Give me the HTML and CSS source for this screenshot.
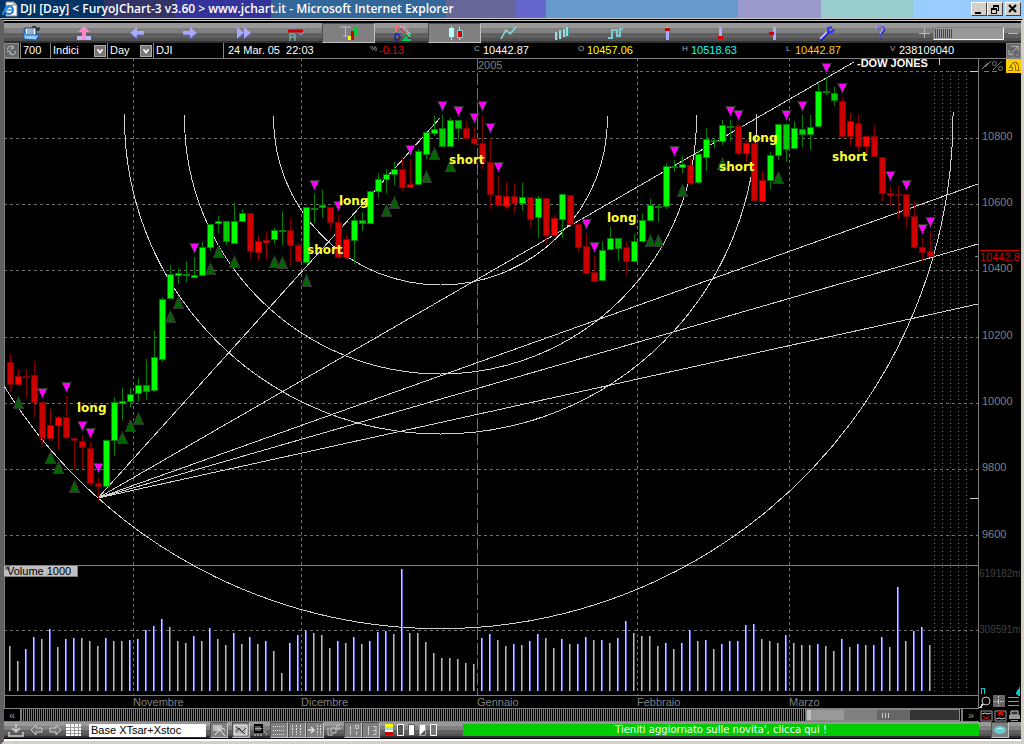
FILE: index.html
```
<!DOCTYPE html>
<html lang="it">
<head>
  <meta charset="UTF-8" />
  <meta name="viewport" content="width=device-width, initial-scale=1.0" />
  <title>DJI [Day] &lt; FuryoJChart-3 v3.60 &gt; www.jchart.it</title>
  <link rel="stylesheet" href="styles.css">
</head>
<body>
  <header class="titlebar">
    <svg class="ie-icon" viewBox="0 0 16 16"><path d="M4 1h8l3 3v11H4z" fill="#fff" stroke="#888"/><path d="M12 1v3h3" fill="none" stroke="#888"/><circle cx="7" cy="9" r="4" fill="none" stroke="#27c" stroke-width="2"/><path d="M4 9h7M1 14Q0 9 11 4" fill="none" stroke="#39d" stroke-width="1.5"/></svg>
    <h1>DJI [Day] &lt; FuryoJChart-3 v3.60 &gt; www.jchart.it - Microsoft Internet Explorer</h1>
    <button class="win" aria-label="Riduci"><svg viewBox="0 0 12 10"><path d="M2 8h6v2H2z"/></svg></button>
    <button class="win" aria-label="Ripristina"><svg viewBox="0 0 12 10"><path d="M4 1h6v2H4zM4 1h1v3H4zM9 1h1v6H9zM8 6h2v1H8zM2 4h6v2H2zM2 4h1v6H2zM7 4h1v6H7zM2 9h6v1H2z"/></svg></button>
    <button class="win win-close" aria-label="Chiudi"><svg viewBox="0 0 12 10"><path d="M2 1l7 7M9 1L2 8" stroke="#000" stroke-width="2"/></svg></button>
  </header>

  <main class="applet">
    <nav class="toolbar">
      <button aria-label="Apri"><svg viewBox="0 0 20 16"><path d="M4 3h11v11H4z" fill="#fff" stroke="#036"/><path d="M6 5h7M6 7h7M6 9h7" stroke="#369"/><path d="M3 14V5l2 5h13l-3 5z" fill="#9cf" stroke="#06c"/><path d="M11 2q4-2 6 2m1-2v3h-3" fill="none" stroke="#000"/></svg></button>
      <button aria-label="Carica"><svg viewBox="0 0 20 16"><path d="M10 1l6 6h-4v8H8V7H4z" fill="#f8c"/><path d="M3 11h5v4H3zM12 11h5v4h-5z" fill="#bbf"/></svg></button>
      <button aria-label="Indietro"><svg viewBox="0 0 20 16"><path d="M3 8l7-6v4h7v4h-7v4z" fill="#aaf"/><path d="M3 8l7 6v-4h7" stroke="#66c" fill="none"/></svg></button>
      <button aria-label="Avanti"><svg viewBox="0 0 20 16"><path d="M17 8l-7-6v4H3v4h7v4z" fill="#aaf"/><path d="M17 8l-7 6v-4H3" stroke="#66c" fill="none"/></svg></button>
      <button aria-label="Ultimo"><svg viewBox="0 0 20 16"><path d="M4 2l7 6-7 6zM11 2l7 6-7 6z" fill="#aaf"/><path d="M11 8l-7 6M18 8l-7 6" stroke="#66c"/></svg></button>
      <button aria-label="Analisi"><svg viewBox="0 0 20 16"><path d="M3 6l4-5 4 5M11 6l4 4 4-4" fill="none" stroke="#99f"/><path d="M2 6h15" stroke="#c00" stroke-width="3"/><path d="M4 16V9h5v7M4 12h5" fill="none" stroke="#7cc"/></svg></button>
      <button class="on" aria-label="Trading"><svg viewBox="0 0 20 16"><path d="M2 3V2h9v1M6.500 2v9M4 11h5" stroke="#bbf" fill="none"/><path d="M9 11h3v4H9z" fill="#ff0"/><path d="M12 6h3v9h-3z" fill="#c00"/><path d="M15 2h3v8h-3z" fill="#0c3"/></svg></button>
      <button aria-label="Disegna"><svg viewBox="0 0 20 16"><path d="M4 7V2h7v5" fill="none" stroke="#f66" stroke-width="2"/><path d="M3 9h3l2 2v2l-2 2H3z" fill="none" stroke="#00c"/><path d="M11 9h7l-6 6h7" fill="none" stroke="#0c6" stroke-width="2"/><path d="M8 1l10 11M11 1l7 8" stroke="#ccf"/><path d="M9 3l9 11" stroke="#c00"/></svg></button>
      <button class="on" aria-label="Candele"><svg viewBox="0 0 20 16"><path d="M6.500 1v14M14.500 2v13" stroke="#9ee"/><path d="M4 3h5v9H4z" fill="#bff"/><path d="M12.500 5.500h5v7h-5z" fill="#c00" stroke="#8cc"/></svg></button>
      <button aria-label="Linea"><svg viewBox="0 0 20 16"><path d="M3 14l5-9 4 4 6-7" fill="none" stroke="#8dd" stroke-width="1.500"/></svg></button>
      <button aria-label="Barre"><svg viewBox="0 0 20 16"><path d="M5 7v8M9 5v9M13 4v8M16 2v9" stroke="#9dd" stroke-width="2"/><path d="M6.500 7v8M10.500 5v9M14.500 4v8M17.500 2v9" stroke="#399"/></svg></button>
      <button aria-label="Scala"><svg viewBox="0 0 20 16"><path d="M4 13h4V5h5v6h3V4h3" fill="none" stroke="#7cc" stroke-width="2"/></svg></button>
      <button aria-label="Apertura"><svg viewBox="0 0 20 16"><path d="M10.500 2v13" stroke="#aaf" stroke-width="3"/><path d="M8 3h5v3H8z" fill="#c00"/></svg></button>
      <button aria-label="Minimo"><svg viewBox="0 0 20 16"><path d="M10.500 2v12" stroke="#aaf" stroke-width="3"/><path d="M8 11h5v3H8z" fill="#c00"/></svg></button>
      <button aria-label="Chiusura"><svg viewBox="0 0 20 16"><path d="M11.500 2v13" stroke="#aaf" stroke-width="3"/><path d="M6 7h5v3H6z" fill="#c00"/></svg></button>
      <button aria-label="Impostazioni"><svg viewBox="0 0 20 16"><path d="M4 15l8-8" stroke="#00c" stroke-width="3"/><path d="M4 14l8-8" stroke="#bbf" stroke-width="2"/><path d="M16 2l-4 1v4h4l2-3" fill="none" stroke="#33f" stroke-width="2"/></svg></button>
      <button aria-label="Aiuto"><svg viewBox="0 0 20 16"><path d="M8 5q0-3 4-3t3 4q-3 2-3 4M12 13v2" fill="none" stroke="#33c" stroke-width="2"/><path d="M7 5q0-3 4-3t3 3q-3 2-3 4" fill="none" stroke="#bbf"/></svg></button>
      <div class="zoombar">
        <button aria-label="Aumenta"><svg viewBox="0 0 12 12"><path d="M6.500 1v10M1 6.500h11" stroke="#bbb"/></svg></button>
        <div class="level"></div>
        <button aria-label="Diminuisci"><svg viewBox="0 0 12 12"><path d="M1 6.500h10" stroke="#bbb"/></svg></button>
      </div>
    </nav>

    <div class="quote">
      <button class="mini" aria-label="Aggiorna"><svg viewBox="0 0 14 13"><path d="M3 6a3 3 0 0 1 6-2M5 9a3 3 0 0 0 6-2M8 1l1 3-3 1M2 8l3-1 2 4" fill="none" stroke="#bcd"/></svg></button>
      <input class="bars" value="700" aria-label="Numero barre">
      <div class="pick pick-list"><select aria-label="Lista"><option>Indici</option></select><svg viewBox="0 0 12 12"><path d="M3 4l3 4 3-4" fill="none" stroke="#fff" stroke-width="2"/></svg></div>
      <div class="pick pick-period"><select aria-label="Periodo"><option>Day</option></select><svg viewBox="0 0 12 12"><path d="M3 4l3 4 3-4" fill="none" stroke="#fff" stroke-width="2"/></svg></div>
      <input class="symbol" value="DJI" aria-label="Simbolo">
      <time>24 Mar. 05&nbsp; 22:03</time>
      <div class="values">
        <span class="down"><small>%</small>-0.13</span>
        <span><small>C</small>10442.87</span>
        <span class="open"><small>O</small>10457.06</span>
        <span class="high"><small>H</small>10518.63</span>
        <span class="low"><small>L</small>10442.87</span>
        <span><small>V</small>238109040</span>
      </div>
      <button class="mini" aria-label="Ingrandisci"><svg viewBox="0 0 14 13"><path d="M7 2h5v5M12 2L3 11M2 6v5h5M4 2h3M11 10v2" fill="none" stroke="#bbb"/></svg></button>
    </div>

    <svg class="chart" viewBox="4 58 1017 651" role="img" aria-label="Grafico Dow Jones">
      <g class="grid">
        <path d="M4 71.500H978M4 138.500H978M4 204.500H978M4 270.500H978M4 337.500H978M4 403.500H978M4 469.500H978M4 535.500H978M4 630.500H978"/>
        <path d="M133.500 58V695M301.500 58V695M637.500 58V695M789.500 58V695"/>
        <path class="year" d="M477.500 58V695"/>
        <path class="future" d="M934.500 71V694M942.500 71V694M950.500 71V694M958.500 71V694M966.500 71V694"/>
      </g>
      <path class="frame" d="M4 58.500H1021M4.500 58V709M4 565.500H978M4 695.500H978M978.500 58V709M4 708.500H978"/>
      <path class="mark" d="M970 71.500H978M970 498.500H978M939.500 58V65"/>

      <!-- ventaglio e archi -->
      <g class="study">
        <path d="M98 498L440 118M98 498L854 62M98 498L978 184M98 498L978 244M98 498L978 304"/>
        <path d="M273.500 116V118A167 167 0 0 0 607.500 118V116"/>
        <path d="M184.500 115V118A256 256 0 0 0 696.500 118V115"/>
        <path d="M124.500 114V118A316 316 0 0 0 756.500 118V114"/>
        <path d="M4 386A513 513 0 0 0 953 112"/>
      </g>
      <g id="volumi"></g>
      <g id="candele"></g>
      <g id="segnali"></g>

      <g class="note">
        <text x="77" y="412">long</text>
        <text x="339" y="205">long</text>
        <text x="307" y="254">short</text>
        <text x="449" y="164">short</text>
        <text x="607" y="222">long</text>
        <text x="719" y="171">short</text>
        <text x="748" y="142">long</text>
        <text x="832" y="161">short</text>
      </g>
      <text class="name" x="857" y="67">-DOW JONES</text>

      <g class="label">
        <text x="478" y="69">2005</text>
        <text x="133" y="706">Novembre</text>
        <text x="301" y="706">Dicembre</text>
        <text x="477" y="706">Gennaio</text>
        <text x="637" y="706">Febbraio</text>
        <text x="789" y="706">Marzo</text>
        <text x="982" y="140">10800</text>
        <text x="982" y="206">10600</text>
        <text x="982" y="272">10400</text>
        <text x="982" y="339">10200</text>
        <text x="982" y="405">10000</text>
        <text x="982" y="471">9800</text>
        <text x="982" y="538">9600</text>
      </g>
      <g class="dim">
        <text x="979" y="577">619182m</text>
        <text x="979" y="633">309591m</text>
      </g>
      <path d="M980 250.500H1020" stroke="#c00"/>
      <path class="frame" d="M975 256.500H978"/>
      <text class="label last" x="980" y="261">10442.8</text>

      <rect x="4" y="566" width="73" height="11" fill="#c0c0c0"/>
      <path d="M4 576.500H77.500V566" fill="none" stroke="#808080"/>
      <rect x="5" y="566" width="5" height="4" fill="#808080"/>
      <text class="label tag" x="7" y="575">Volume 1000</text>

      <!-- scala log / percentuale -->
      <path d="M982 69l9-8" stroke="#888"/>
      <g fill="none" stroke="#777"><circle cx="994.500" cy="63.500" r="2"/><circle cx="1000.500" cy="68.500" r="2"/><path d="M993 70l9-9M984 71.500h5M992 71.500h5"/></g>
      <rect x="1006" y="59" width="15" height="14" fill="#fc0"/>
      <path d="M1008 70h4v-3h-2l3-4 3 3M1013 63q6-2 6 7h-4v-4" fill="none" stroke="#987000"/>

      <!-- lente, croce, elenco -->
      <path d="M981.500 694v-6h3v6" fill="none" stroke="#0cc"/>
      <path d="M1020 686v10h-2l-2-3z" fill="#0cc"/>
      <circle cx="986" cy="701" r="4" fill="none" stroke="#ccc"/>
      <path d="M983 704l-3 4" stroke="#ccc" stroke-width="2"/>
      <rect x="993" y="695" width="12" height="12" fill="#666"/>
      <path d="M998.500 696v10M994 701.500h10" stroke="#ccc" stroke-dasharray="2 1"/>
      <path d="M1008 697.500h11M1008 701.500h11M1008 705.500h11" stroke="#999"/>
    </svg>

    <div class="scroll">
      <button aria-label="Inizio">«</button>
      <div class="track"><div class="thumb"></div></div>
      <button aria-label="Fine">»</button>
      <button class="tool" aria-label="Togli basso"><svg viewBox="0 0 13 12"><path d="M1 1h11v10H1z" fill="none" stroke="#999"/><path d="M2 4l3-1 3 1 3-1" stroke="#ccc" fill="none"/><path d="M3 10l7-4M3 6l7 4" stroke="#e00"/></svg></button>
      <button class="tool" aria-label="Togli alto"><svg viewBox="0 0 13 12"><path d="M1 1h11v10H1z" fill="none" stroke="#999"/><path d="M2 9l3-1 3 1 3-1" stroke="#ccc" fill="none"/><path d="M4 1l5 4M9 1L4 5" stroke="#e00" stroke-width="2"/></svg></button>
      <button class="tool" aria-label="Stampa"><svg viewBox="0 0 13 12"><path d="M3 1h7v4H3z" fill="#333" stroke="#ccc"/><path d="M1 5h11v4H1zM3 10h7v1H3z" fill="#999"/></svg></button>
    </div>

    <div class="toolbar bottombar">
      <button class="save" aria-label="Salva"><svg viewBox="0 0 16 14"><path d="M8 1v8M4 5l4 4 4-4M1 9v4h14V9" fill="none" stroke="#ccc" stroke-width="1.500"/></svg></button>
      <button aria-label="Precedente"><svg viewBox="0 0 16 14"><path d="M2 7l5-5v3h6v4H7v3z" fill="#777" stroke="#ccc"/></svg></button>
      <button aria-label="Successivo"><svg viewBox="0 0 16 14"><path d="M14 7L9 2v3H3v4h6v3z" fill="#777" stroke="#ccc"/></svg></button>
      <button class="wide" aria-label="Tabella"><svg viewBox="0 0 16 14"><path d="M0 1h15v12H0z" fill="#fff"/><path d="M4.500 1v12M8.500 1v12M12.500 1v12M0 4.500h15M0 7.500h15M0 10.500h15" stroke="#999"/></svg></button>
      <input class="base" value="Base XTsar+Xstoc" aria-label="Modello">
      <button class="on" aria-label="Strumento"><svg viewBox="0 0 16 14"><path d="M2 2h9v6H2z" fill="#bbb"/><path d="M6 4l8 9M8 7l-4 5M11 5l3 2" stroke="#eee"/></svg></button>
      <button class="on gap" aria-label="Grafico"><svg viewBox="0 0 16 14"><path d="M1 2h13v10H1z" fill="#bbb" stroke="#eee"/><path d="M3 9l3-4 3 4 4-4M3 4l9 7" fill="none" stroke="#333"/></svg></button>
      <button class="wide" aria-label="Codice"><svg viewBox="0 0 16 14"><path d="M2 1h9v9H2z" fill="#000"/><path d="M4 3v5M6 3v5M8 3v5M3 5.500h7" stroke="#aaa"/><path d="M2 12h9M12 8l3 4" stroke="#ccc" stroke-dasharray="2 1"/></svg></button>
      <button class="on" aria-label="Righe"><svg viewBox="0 0 16 14"><path d="M2 3.500h12M2 7.500h12M2 11.500h12" stroke="#ddd" stroke-dasharray="1 1"/></svg></button>
      <button class="on" aria-label="Colonne"><svg viewBox="0 0 16 14"><path d="M3.500 2v10M7.500 2v10M11.500 2v10" stroke="#ddd" stroke-dasharray="2 1"/></svg></button>
      <button class="on" aria-label="Sposta"><svg viewBox="0 0 16 14"><path d="M1 7h5M4 4l3 3-3 3" fill="none" stroke="#ddd" stroke-width="1.500"/><path d="M10.500 2v10M13.500 2v10" stroke="#ddd" stroke-dasharray="2 1"/></svg></button>
      <button class="wide" aria-label="Log"><svg viewBox="0 0 16 14"><path d="M2 5v7h5M5 5h5v5H5zM14 2h-3v4h3V4" fill="none" stroke="#ccc"/></svg></button>
      <button class="on" aria-label="Decimali"><svg viewBox="0 0 16 14"><path d="M5.500 3v9M10.500 2.500h3v3h-3zM11.500 8v4" fill="none" stroke="#ccc"/></svg></button>
      <button class="on" aria-label="Livelli"><svg viewBox="0 0 16 14"><path d="M5.500 3v9M10 3.500h3v8h-3M10 7.500h3" fill="none" stroke="#ccc"/></svg></button>
      <button class="slim gap" aria-label="Colori"><svg viewBox="0 0 9 14"><path d="M0 1h8v3H0z" fill="#ff0"/><path d="M0 4h8v3H0z" fill="#9dd"/><path d="M0 7h8v2H0z" fill="#fff"/><path d="M0 9h8v3H0z" fill="#c00"/></svg></button>
      <button class="slim" aria-label="Stile 1"><svg viewBox="0 0 9 14"><path d="M1.500 1.500h6v11h-6z" fill="#555" stroke="#fff"/></svg></button>
      <button class="slim" aria-label="Stile 2"><svg viewBox="0 0 9 14"><path d="M1.500 1.500h6v11h-6z" fill="#fff" stroke="#555"/></svg></button>
      <button class="slim" aria-label="Stile 3"><svg viewBox="0 0 9 14"><path d="M1.500 1.500h6v11h-6z" fill="#555" stroke="#aaa"/><path d="M7 2v5l-5 5V2z" fill="#fff"/></svg></button>
      <button class="slim" aria-label="Stile 4"><svg viewBox="0 0 9 14"><path d="M1.500 1.500h6v11h-6z" fill="#777" stroke="#fff"/></svg></button>
      <a class="news" href="#">Tieniti aggiornato sulle novita', clicca qui !</a>
      <button class="on globe" aria-label="Connessione"><svg viewBox="0 0 16 14"><ellipse cx="8" cy="7" rx="6" ry="4" fill="#6cc"/><path d="M5 6q3-2 6 0" stroke="#cff" fill="none"/></svg></button>
    </div>
  </main>
  <script src="script.js"></script>
</body>
</html>
```
FILE: styles.css
```
* {
  box-sizing: border-box;
}
body {
  margin: 0;
  background: #000;
  color: #fff;
  font-family: "Liberation Sans", Arial, sans-serif;
  font-size: 11px;
}
button, input, select {
  margin: 0;
  padding: 0;
  border: 0;
  border-radius: 0;
  background: none;
  color: inherit;
  font: inherit;
}
button {
  display: flex;
  align-items: center;
  justify-content: center;
}
svg {
  display: block;
  flex: none;
}

/* barra del titolo */
.titlebar {
  display: flex;
  align-items: center;
  height: 18px;
  padding: 0 3px 0 2px;
  background: linear-gradient(to right,
    #003366 10.2%, #333366 10.2% 17.1%, #333399 17.1% 26.5%,
    #336699 26.5% 43.6%, #666699 43.6% 50.4%, #6666cc 50.4% 53.3%,
    #6699cc 53.3% 72.1%, #9999cc 72.1% 80.2%, #99cccc 80.2% 89.3%,
    #99ccff 89.3%);
}
.ie-icon {
  width: 16px;
  height: 16px;
}
.titlebar h1 {
  flex: 1;
  margin: 0 0 0 2px;
  font: 600 12px/18px "Open Sans", "Noto Sans", sans-serif;
  white-space: nowrap;
}
.win {
  width: 16px;
  height: 14px;
  background: #d4d0c8;
  border: 1px solid;
  border-color: #fff #404040 #404040 #fff;
}
.win svg {
  width: 12px;
  height: 10px;
}
.win-close {
  margin-left: 2px;
}

/* applet */
.applet {
  border: solid #d4d0c8;
  border-width: 3px 3px 4px 4px;
  border-left-color: #606060;
  border-top: 3px double #c8c8c8;
  padding: 2px 0 3px;
  box-shadow: inset 0 -2px #fff;
}
.toolbar {
  display: flex;
  height: 20px;
  background: linear-gradient(#999 0 25%, #808080 25% 50%, #606060 50% 75%, #505050 75% 90%, #303030 90%);
}
.toolbar > button {
  flex: 1;
  border: 1px solid transparent;
}
.toolbar > button svg {
  width: 20px;
  height: 16px;
}
.toolbar > .on {
  background: #808080;
  border-color: #505050 #c0c0c0 #c0c0c0 #505050;
}
.zoombar {
  display: flex;
  align-items: center;
  width: 116px;
  padding: 0 2px 0 13px;
}
.zoombar button svg {
  width: 12px;
  height: 12px;
}
.level {
  flex: 1;
  height: 13px;
  margin: 0 3px;
  border: 1px solid;
  border-color: #808080 #fff #fff #808080;
  background: repeating-linear-gradient(to right, #e00 0 1px, #999 1px 2px) 1px 1px / 18px 9px no-repeat #999;
}

.quote {
  display: flex;
  height: 15px;
  line-height: 15px;
}
.quote > input, .pick, .quote time {
  border-left: 1px solid #887;
  padding-left: 2px;
}
.mini {
  width: 15px;
  height: 15px;
  background: #666;
  border: 1px solid #888;
}
.mini svg {
  width: 13px;
  height: 13px;
}
.quote > .bars {
  width: 30px;
  margin-left: 1px;
}
.pick {
  display: flex;
  align-items: center;
}
.pick select {
  flex: 1;
  min-width: 0;
  height: 15px;
  appearance: none;
}
.pick option {
  background: #000;
}
.pick svg {
  width: 12px;
  height: 12px;
  margin-right: 1px;
  background: #777;
  border: 1px solid #aaa;
}
.pick-list {
  width: 57px;
}
.pick-period {
  width: 46px;
}
.quote > .symbol {
  width: 70px;
}
.quote time {
  width: 147px;
  padding-left: 4px;
}
.values {
  flex: 1;
  display: grid;
  grid-template-columns: repeat(6, 1fr);
  padding-right: 12px;
}
.values small {
  display: inline-block;
  width: 9px;
  color: #aaa;
  font-size: 8px;
  vertical-align: 3px;
  line-height: 8px;
}
.down { color: #e00; }
.open { color: #ff0; }
.high { color: #0ff; }
.low { color: #fc0; }

/* grafico */
.chart {
  width: 100%;
  height: auto;
  font-family: "Liberation Sans", Arial, sans-serif;
}
.chart path, .chart rect {
  shape-rendering: crispEdges;
}
.grid path {
  stroke: #707070;
  stroke-dasharray: 3 3;
}
.grid .year {
  stroke-dasharray: 12 3;
}
.grid .future {
  stroke-dasharray: 1 3;
}
.frame {
  fill: none;
  stroke: #808080;
}
.mark {
  stroke: #ccc;
}
.study {
  fill: none;
  stroke: #d0d0d0;
}
.note {
  font: bold 12px "DejaVu Sans", sans-serif;
  fill: #ffff33;
}
.name {
  font-size: 11px;
  font-weight: bold;
  fill: #fff;
}
.label {
  font-size: 11px;
  fill: #808080;
}
.dim {
  font-size: 10px;
  fill: #404040;
}
.last {
  fill: #c00;
}
.tag {
  fill: #000;
}
.r { fill: #cc0000; stroke: #800000; }
.R { fill: #ff0000; stroke: #990000; }
.g { fill: #00cc00; stroke: #008000; }
.G { fill: #00ff00; stroke: #008000; }
.sell { fill: #ff00ff; stroke: #333; }
.buy { fill: #006600; stroke: #333; }
.vol-u { fill: #ccccff; }
.vol-u2 { fill: #6666cc; }
.vol-d { fill: #ff9999; }
.vol-d2 { fill: #666; }

.scroll {
  display: flex;
  height: 13px;
}
.scroll > button {
  width: 16px;
  color: #999;
  line-height: 12px;
  border-bottom: 1px solid #808080;
}
.track {
  flex: 1;
  display: flex;
  border: 1px solid #808080;
  border-top: 0;
  background: repeating-linear-gradient(to right, #777 0 1px, #000 1px 2px);
}
.thumb {
  width: 16.4%;
  margin-left: 83.4%;
  border: 1px solid #888;
  background:
    repeating-linear-gradient(to right, #ccc 0 1px, transparent 1px 3px) 52% 50% / 8px 5px no-repeat,
    linear-gradient(to right, #c0c0c0 4px, #999 4px 37px, #808080 37px 70px, #666 70px 103px, #333 103px);
}
.scroll > .tool {
  width: 14px;
  border: 0;
}
.tool svg {
  width: 13px;
  height: 12px;
}

.bottombar {
  height: 16px;
  align-items: center;
}
.bottombar > button {
  flex: none;
  width: 18px;
  height: 16px;
}
.bottombar > button svg {
  width: 16px;
  height: 14px;
}
.bottombar > .save {
  width: 24px;
}
.bottombar > .wide {
  width: 20px;
}
.bottombar > .slim {
  width: 11px;
}
.bottombar > .slim svg {
  width: 9px;
}
.bottombar > .gap {
  margin-left: 4px;
}
.base {
  width: 117px;
  height: 13px;
  margin: 0 4px 0 5px;
  padding-left: 2px;
  background: #fff;
  color: #000;
}
.news {
  flex: 1;
  height: 12px;
  margin-left: 24px;
  background: #00cc00;
  color: #fff;
  font: 10px/12px "DejaVu Sans", sans-serif;
  text-align: center;
  text-decoration: none;
}
.bottombar > .globe {
  margin: 0 12px;
}
```
FILE: script.js
```
const PASSO = 8;
const BASE_VOLUMI = 691;

// colore, corpo alto, corpo basso, massimo, minimo
const candele = `
r 362 385 354 392|R 376 385 370 385|r 376 378 369 398|r 375 403 361 418|r 402 439 402 445
R 425 439 409 439|R 417 426 416 450|r 417 438 396 439|r 438 441 437 469|r 441 448 435 469
r 448 484 442 486|r 483 487 477 501|G 440 487 440 487|G 402 441 397 456|G 401 404 388 420
G 394 402 388 407|G 385 394 378 401|g 385 392 359 400|G 357 391 331 392|G 299 360 297 362
G 274 299 265 299|G 273 276 268 284|g 274 276 261 282|G 275 278 257 278|G 247 276 242 276
G 224 248 224 251|G 221 224 216 233|g 221 242 221 245|G 221 244 203 244|G 213 222 209 222
r 213 252 213 259|R 241 253 235 261|R 240 243 232 259|G 230 240 228 244|g 230 232 212 245
r 230 246 218 266|r 245 262 243 262|G 207 263 207 263|g 208 210 194 223|g 205 208 190 218
r 207 223 207 229|r 222 258 215 258|R 239 258 235 259|G 220 241 216 264|g 220 224 212 231
G 191 224 191 224|G 179 192 173 198|G 174 180 169 193|G 169 175 162 185|r 169 188 158 191
R 184 188 159 188|G 151 185 149 185|G 132 155 131 159|G 129 134 116 136|g 128 147 115 147
G 120 147 118 147|g 120 129 120 140|r 128 139 121 139|r 138 144 127 145|r 143 162 115 169
r 162 195 137 209|r 195 206 176 206|R 196 207 182 209|r 196 204 183 214|G 197 204 183 211
r 197 220 197 228|G 198 218 196 238|r 198 236 198 243|R 218 236 215 236|G 194 220 194 238
r 195 225 195 225|r 224 248 223 252|r 246 274 233 274|r 272 282 256 282|G 250 281 241 281
G 238 250 227 250|g 238 249 238 261|r 247 262 241 276|G 241 262 234 262|G 220 242 214 242
G 205 221 199 222|g 206 208 204 222|G 166 207 163 209|g 166 168 160 172|G 164 168 156 173
r 165 184 157 185|G 154 183 150 184|G 139 158 128 171|g 140 142 138 148|G 125 142 120 145
g 126 128 120 141|r 126 154 124 155|R 143 154 140 162|r 143 201 142 202|R 180 202 171 202
G 155 181 152 189|G 124 156 124 160|g 124 150 124 162|G 128 149 121 149|g 129 135 115 147
G 127 135 115 150|G 91 127 84 127|g 91 93 77 95|g 93 101 87 106|r 101 137 97 138
R 121 137 113 145|r 123 147 114 152|R 136 147 136 154|r 136 157 125 157|r 157 194 157 201
r 193 196 185 206|r 194 196 186 219|r 194 217 194 227|r 216 248 201 248|r 247 253 238 261
r 251 257 231 257`.trim().split(/[|\n]/);

const volumi = ("45d 30d 42u 54u 52d 62u 44d 52u 53u 53d 50d 45d 53u 50d 50d 51u 52u 61u 65u 72u " +
  "64d 50d 48d 55u 50d 63u 52d 46d 58u 47d 54u 47d 50u 40d 18d 48u 56u 60u 58d 56d " +
  "43d 50u 48d 54u 47d 50u 59u 60u 57d 122u 58d 58d 49d 38d 33d 33d 32d 28d 27d 53u " +
  "57u 51d 45d 47u 46d 50u 57u 53d 43d 52u 47d 47u 54u 51d 51u 48d 53u 70u 58d 55d " +
  "55d 45d 48u 42d 48u 61u 50d 51u 42d 47u 50u 50u 66u 67u 52d 50d 48d 56u 48d 46d " +
  "46d 47u 45d 40d 52u 44d 47u 46d 46u 54u 44d 104u 50d 60u 64u 46d").split(" ");

// [indice candela, y]
const vendite = [[4, 388], [7, 382], [9, 421], [10, 428], [11, 463], [23, 243], [38, 180], [41, 201],
  [50, 145], [54, 101], [56, 106], [58, 113], [59, 101], [60, 123], [61, 162], [72, 219], [73, 242],
  [83, 146], [90, 106], [91, 110], [97, 110], [99, 101], [102, 63], [104, 83], [110, 171],
  [112, 180], [114, 224], [115, 217]];
const acquisti = [[1, 397], [5, 452], [6, 462], [8, 481], [14, 432], [15, 420], [16, 413], [20, 311],
  [21, 297], [25, 263], [26, 246], [28, 256], [33, 256], [34, 257], [37, 275], [47, 205], [48, 197],
  [52, 171], [53, 148], [55, 160], [80, 235], [81, 235], [84, 185], [89, 158], [96, 172]];

function centro(i) {
  return 10.5 + i * PASSO;
}

document.getElementById("candele").innerHTML = candele.map((riga, i) => {
  const [colore, ...v] = riga.split(" ");
  const [alto, basso, max, min] = v.map(Number);
  const x = centro(i);
  return `<path class="${colore}" d="M${x} ${max}V${min}"/>
    <rect class="${colore}" x="${x - 3}" y="${alto + 0.5}" width="6" height="${basso - alto - 1}"/>`;
}).join("");

document.getElementById("volumi").innerHTML = volumi.map((v, i) => {
  const h = parseInt(v);
  const tipo = v.slice(-1);
  const x = centro(i) - 1.5;
  return `<rect class="vol-${tipo}" x="${x}" y="${BASE_VOLUMI - h}" width="1" height="${h}"/>
    <rect class="vol-${tipo}2" x="${x + 1}" y="${BASE_VOLUMI - h}" width="1" height="${h}"/>`;
}).join("");

document.getElementById("segnali").innerHTML =
  acquisti.map(([i, y]) => `<path class="buy" d="M${centro(i)} ${y}l5 11h-10z"/>`).join("") +
  vendite.map(([i, y]) => `<path class="sell" d="M${centro(i) - 5} ${y}h10l-5 10z"/>`).join("");
```
